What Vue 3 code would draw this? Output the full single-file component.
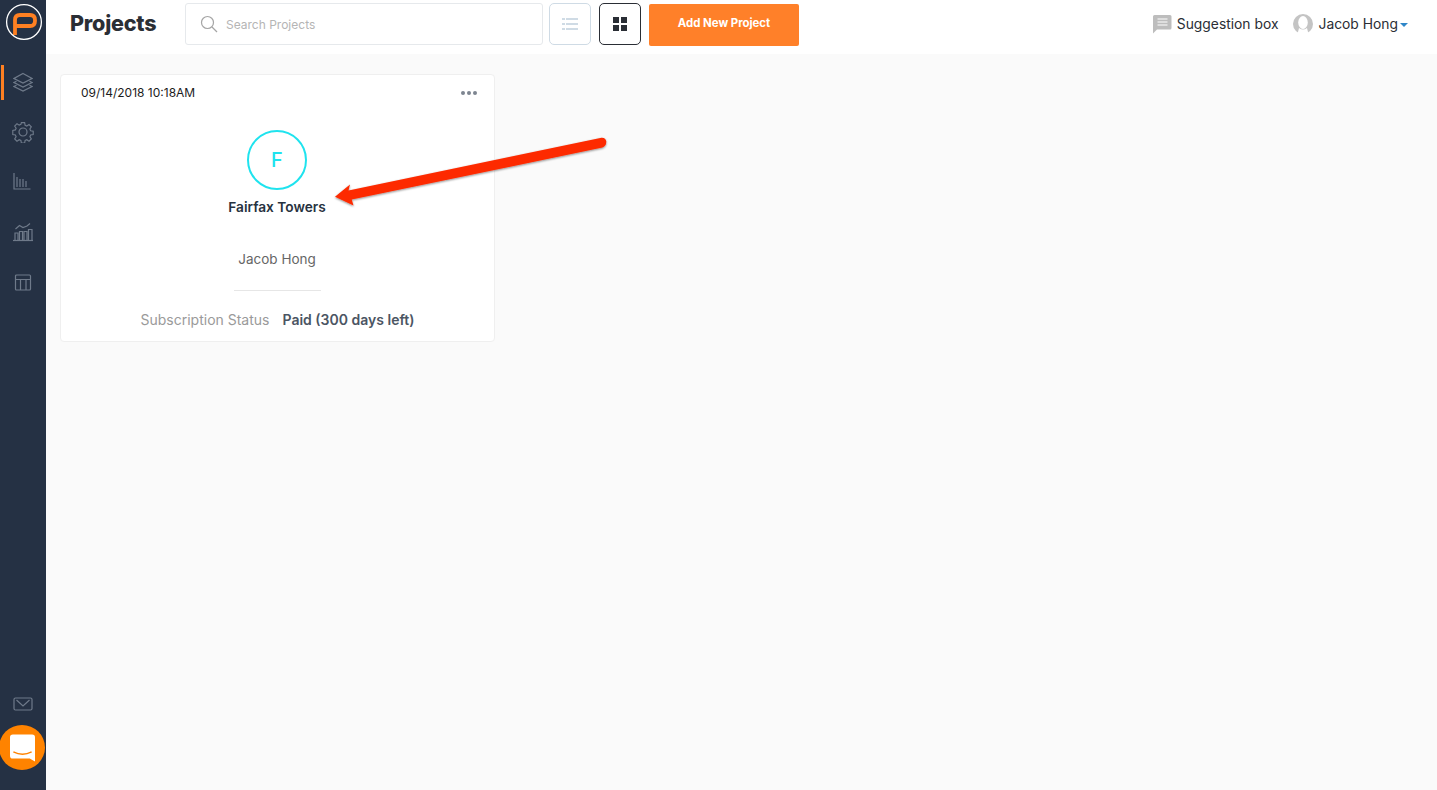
<script setup>
const navIcons = ['layers', 'gear', 'bars', 'trend', 'layout']
</script>

<template>
  <div class="app">
    <aside class="sidebar">
      <div class="logo">
        <svg width="38" height="38" viewBox="0 0 38 38">
          <path d="M10 32V17Q10 12 15 12H25Q30 12 30 17V18Q30 23 25 23H10" fill="none" stroke="#ff8022" stroke-width="3.8" />
          <circle cx="19" cy="19" r="17.4" fill="none" stroke="#fff" stroke-width="1.3" />
        </svg>
      </div>
      <nav class="nav">
        <div v-for="icon in navIcons" :key="icon" class="nav-item" :class="{ active: icon === 'layers' }">
          <svg v-if="icon === 'layers'" width="20" height="20" viewBox="0 0 20 20" class="ico">
            <path d="M10 1.5 19 6.5 10 11 1 6.5Z" />
            <path d="M3.5 9.2 1 10.5 10 15 19 10.5 16.5 9.2" />
            <path d="M3.5 13.2 1 14.5 10 19 19 14.5 16.5 13.2" />
          </svg>
          <svg v-else-if="icon === 'gear'" width="22" height="22" viewBox="0 0 22 22" class="ico">
            <circle cx="11" cy="11" r="4" />
            <path d="M9.3 1.2h3.4l.5 2.7 1.8.8 2.3-1.5 2.4 2.4-1.5 2.3.8 1.8 2.7.5v3.4l-2.7.5-.8 1.8 1.5 2.3-2.4 2.4-2.3-1.5-1.8.8-.5 2.7H9.3l-.5-2.7-1.8-.8-2.3 1.5-2.4-2.4 1.5-2.3-.8-1.8-2.7-.5V9.3l2.7-.5.8-1.8-1.5-2.3 2.4-2.4L7 3.8l1.8-.8z" transform="translate(.5 .5) scale(.955)" />
          </svg>
          <svg v-else-if="icon === 'bars'" width="20" height="20" viewBox="0 0 20 20" class="ico">
            <path d="M1 1V17H17.500" />
            <path d="M4 5V15M7 7V15M10 7V15M13 9V15" />
          </svg>
          <svg v-else-if="icon === 'trend'" width="22" height="20" viewBox="0 0 22 20" class="ico">
            <path d="M1 18.500H21" />
            <path d="M3 18V11H6V18M7.500 18V9.500H10.500V18M12 18V9.500H15V18M16.500 18V7.500H20V18" />
            <path d="M3.500 7 7.500 3.500 11 5.500 15 4 18 1.500" />
          </svg>
          <svg v-else width="18" height="18" viewBox="0 0 18 18" class="ico">
            <rect x="1.500" y="2" width="15" height="15" rx="1" />
            <path d="M1.500 6.500H16.500M6.500 6.500V17M12 6.500V17" />
          </svg>
        </div>
      </nav>
      <div class="mail">
        <svg width="20" height="14" viewBox="0 0 20 14" class="ico">
          <rect x="1" y="1" width="18" height="12" rx="1.500" />
          <path d="M3.500 3 10 9 16.500 3" />
        </svg>
      </div>
    </aside>

    <div class="main">
      <header class="topbar">
        <h1 class="title">Projects</h1>
        <label class="search">
          <svg width="18" height="18" viewBox="0 0 18 18" class="search-ico">
            <circle cx="7.500" cy="7.500" r="6" />
            <path d="M12 12 17 17" />
          </svg>
          <span class="placeholder">Search Projects</span>
        </label>
        <button class="view-btn list">
          <svg width="16" height="14" viewBox="0 0 16 14" fill="#cfdbe5">
            <rect x="0" y="1" width="3" height="2" /><rect x="4" y="1" width="12" height="2" />
            <rect x="0" y="6" width="3" height="2" /><rect x="4" y="6" width="12" height="2" />
            <rect x="0" y="11" width="3" height="2" /><rect x="4" y="11" width="12" height="2" />
          </svg>
        </button>
        <button class="view-btn grid">
          <svg width="14" height="14" viewBox="0 0 14 14" fill="#2a2e35">
            <rect width="6" height="6" /><rect x="8" width="6" height="6" />
            <rect y="8" width="6" height="6" /><rect x="8" y="8" width="6" height="6" />
          </svg>
        </button>
        <button class="add-btn">Add New Project</button>
        <div class="spacer"></div>
        <div class="suggest">
          <svg width="20" height="20" viewBox="0 0 20 20">
            <path d="M1 2.500Q1 1 2.500 1H18Q19.500 1 19.500 2.500V14Q19.500 15.500 18 15.500H5L1 19.500Z" fill="#bdbdbd" />
            <path d="M5.500 5H15.500M5.500 8H15.500M5.500 11H15.500" stroke="#fff" stroke-width="1.200" />
          </svg>
          <span>Suggestion box</span>
        </div>
        <div class="user">
          <svg width="20" height="20" viewBox="0 0 20 20">
            <circle cx="10" cy="10" r="10" fill="#c4c4c4" />
            <ellipse cx="10" cy="8.500" rx="4.800" ry="6.500" fill="#fff" />
            <path d="M6 14Q10 17 14 14L15.500 20H4.500Z" fill="#fff" />
          </svg>
          <span>Jacob Hong</span>
          <i class="caret"></i>
        </div>
      </header>

      <main class="content">
        <article class="card">
          <div class="card-top">
            <span class="date">09/14/2018 10:18AM</span>
            <span class="dots"><i></i><i></i><i></i></span>
          </div>
          <div class="avatar">F</div>
          <div class="name">Fairfax Towers</div>
          <div class="owner">Jacob Hong</div>
          <div class="divider"></div>
          <div class="status">
            <span class="status-label">Subscription Status</span>
            <span class="status-value">Paid (300 days left)</span>
          </div>
        </article>
      </main>
    </div>

    <svg class="arrow" width="290" height="90" viewBox="0 0 290 90">
      <defs>
        <filter id="sh" x="-10%" y="-30%" width="120%" height="170%">
          <feDropShadow dx="0" dy="1" stdDeviation="1.200" flood-color="#000" flood-opacity=".45" />
        </filter>
      </defs>
      <path d="M281.500 12.700Q285.800 12.500 286.300 16.500Q286.300 21 282.500 22.500L31.700 74.500L33.500 80.500L15 71.700L30 59.500L28.500 65.500Z" fill="#fd2b03" filter="url(#sh)" />
    </svg>

    <div class="chat">
      <svg width="25" height="28" viewBox="0 0 26 28">
        <path d="M3 0H23Q26 0 26 3V28L20.500 25H3Q0 25 0 22V3Q0 0 3 0Z" fill="#fff" />
        <path d="M3.500 18Q13 23 22.500 18" fill="none" stroke="#ff8300" stroke-width="1.500" />
      </svg>
    </div>
  </div>
</template>

<style>
html, body { margin: 0; background: #fafafa; }
</style>

<style scoped>
.app {
  position: relative;
  display: flex;
  width: 1437px;
  height: 790px;
  overflow: hidden;
  font-family: Inter, "Noto Sans", sans-serif;
  background: #fafafa;
}
.sidebar {
  width: 46px;
  flex: none;
  background: #253144;
  display: flex;
  flex-direction: column;
  align-items: center;
}
.logo { height: 38px; margin-top: 3px; margin-left: 2px; }
.nav { display: flex; flex-direction: column; margin-top: 16px; width: 100%; }
.nav-item {
  height: 50px;
  display: flex;
  align-items: center;
  justify-content: center;
  position: relative;
}
.nav-item.active::before {
  content: "";
  position: absolute;
  left: 1px;
  top: 8px;
  width: 3px;
  height: 35px;
  background: #ff8022;
}
.ico { fill: none; stroke: #6f7a8a; stroke-width: 1.2; }
.mail { margin-top: auto; margin-bottom: 79px; height: 14px; line-height: 0; }
.main { flex: 1; display: flex; flex-direction: column; min-width: 0; }
.topbar {
  height: 54px;
  flex: none;
  background: #fff;
  display: flex;
  align-items: center;
  padding: 0 29px 6px 24px;
  box-sizing: border-box;
}
.title {
  margin: 0 29px 2px 0;
  width: 86px;
  font-size: 21.5px;
  font-weight: 800;
  letter-spacing: -0.2px;
  color: #2a2e35;
  white-space: nowrap;
}
.search {
  width: 358px;
  height: 42px;
  box-sizing: border-box;
  border: 1px solid #e6e9ec;
  border-radius: 3px;
  display: flex;
  align-items: center;
  padding-left: 14px;
  margin-right: 6px;
}
.search-ico { fill: none; stroke: #a5a5a5; stroke-width: 1.2; margin-right: 8px; }
.placeholder { font-size: 12px; color: #b5b5b5; }
.view-btn {
  width: 42px;
  height: 42px;
  box-sizing: border-box;
  background: #fff;
  border-radius: 5px;
  padding: 0;
  display: flex;
  align-items: center;
  justify-content: center;
  margin-right: 8px;
}
.view-btn.list { border: 1px solid #cfdbe5; }
.view-btn.grid { border: 1px solid #2a2e35; }
.add-btn {
  width: 150px;
  height: 42px;
  border: 0;
  border-radius: 2px;
  background: #ff8029;
  color: #fff;
  font-family: inherit;
  font-size: 11.4px;
  font-weight: 700;
  margin-top: 2px;
  padding: 0 0 5px;
}
.spacer { flex: 1; }
.suggest, .user {
  display: flex;
  align-items: center;
  font-size: 13.85px;
  color: #2a2e35;
}
.suggest { gap: 5px; margin-right: 15px; }
.user { gap: 5px; }
.caret {
  width: 0;
  height: 0;
  border-left: 4px solid transparent;
  border-right: 4px solid transparent;
  border-top: 4px solid #2f86c8;
  margin-left: -3px;
  margin-top: 2px;
}
.content { flex: 1; padding: 20px 14px; }
.card {
  width: 435px;
  height: 268px;
  box-sizing: border-box;
  background: #fff;
  border: 1px solid #efefef;
  border-radius: 4px;
  display: flex;
  flex-direction: column;
  align-items: center;
}
.card-top {
  align-self: stretch;
  display: flex;
  justify-content: space-between;
  align-items: center;
  height: 18px;
  margin-top: 8px;
  padding: 0 17px 0 20px;
}
.date { font-size: 12px; color: #1c1c1c; }
.dots { display: flex; gap: 2px; margin-top: 2px; }
.dots i { width: 4px; height: 4px; border-radius: 50%; background: #7d8590; }
.avatar {
  width: 60px;
  height: 60px;
  box-sizing: border-box;
  border: 2px solid #1fe3ee;
  border-radius: 50%;
  margin-top: 29px;
  margin-right: 2px;
  padding-left: 1px;
  display: flex;
  align-items: center;
  justify-content: center;
  color: #1fe3ee;
  font-size: 20px;
  font-weight: 500;
}
.name { margin-top: 9px; margin-right: 1px; font-size: 13.7px; font-weight: 600; color: #273240; line-height: 17px; }
.owner { margin-top: 34px; margin-right: 1px; font-size: 13.5px; color: #666; line-height: 18px; }
.divider { width: 87px; height: 1px; background: #e6e6e6; margin-top: 22px; }
.status { display: flex; gap: 13px; margin-top: 20px; font-size: 14px; line-height: 18px; }
.status-label { color: #9a9a9a; }
.status-value { color: #4b5563; font-weight: 600; }
.arrow { position: absolute; left: 320px; top: 125px; }
.chat {
  position: absolute;
  left: -1px;
  top: 725px;
  width: 46px;
  height: 45px;
  border-radius: 50%;
  background: #ff8300;
  display: flex;
  align-items: center;
  justify-content: center;
  box-sizing: content-box;
}
</style>
